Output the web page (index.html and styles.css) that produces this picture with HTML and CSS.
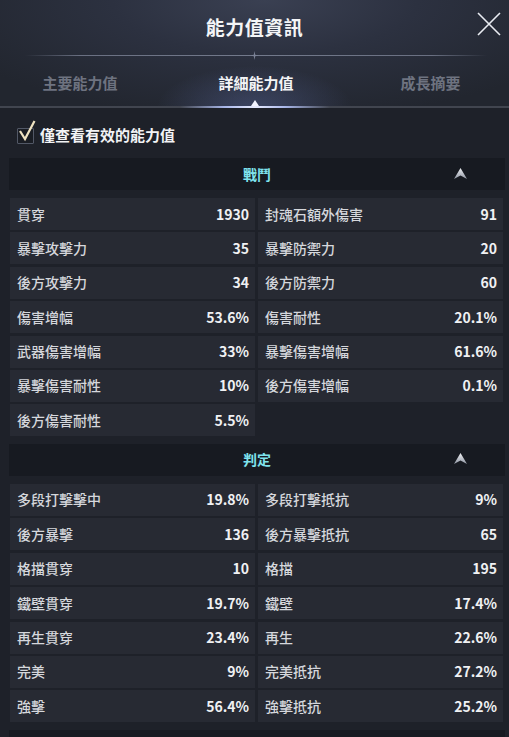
FILE: index.html
```html
<!DOCTYPE html>
<html lang="zh-Hant">
<head>
<meta charset="utf-8">
<title>能力值資訊</title>
<link rel="stylesheet" href="styles.css">
</head>
<body>
<div class="page">
  <header class="head">
    <div class="titlebar">
      <span></span>
      <h1 class="title">能力值資訊</h1>
      <button class="close" aria-label="關閉">
        <svg width="24" height="24" viewBox="0 0 24 24"><path d="M1 1 L23 23 M23 1 L1 23" stroke="#e9ecf2" stroke-width="1.6" fill="none"/></svg>
      </button>
    </div>
    <div class="divider">
      <svg class="sparkle" width="9" height="9" viewBox="0 0 9 9"><path d="M4.5 0 L5.2 3.8 L9 4.5 L5.2 5.2 L4.5 9 L3.8 5.2 L0 4.5 L3.8 3.8 Z" fill="#7b8296"/></svg>
    </div>
    <nav class="tabs">
      <span class="tab">主要能力值</span>
      <span class="tab active">詳細能力值</span>
      <span class="tab">成長摘要</span>
    </nav>
    <div class="tabline"><span class="tri"></span></div>
  </header>

  <label class="filter">
    <span class="box">
      <svg class="check" width="18" height="22" viewBox="0 0 18 22"><path d="M2 11 L7 19 L16.5 1" stroke="#efe3c2" stroke-width="2.2" fill="none" stroke-linejoin="miter"/></svg>
    </span>
    <span class="filter-text">僅查看有效的能力值</span>
  </label>

  <section class="group">
    <div class="group-head">
      <span class="group-title">戰鬥</span>
      <svg class="arrow" width="13" height="11" viewBox="0 0 13 11"><defs><linearGradient id="ag1" x1="0" y1="0" x2="0" y2="1"><stop offset="0" stop-color="#f0f2f5"/><stop offset="1" stop-color="#9096a3"/></linearGradient></defs><path d="M6.5 0 L13 11 L6.5 7.5 L0 11 Z" fill="url(#ag1)"/></svg>
    </div>
    <div class="grid">
      <div class="cell"><span class="k">貫穿</span><span class="v">1930</span></div>
      <div class="cell"><span class="k">封魂石額外傷害</span><span class="v">91</span></div>
      <div class="cell"><span class="k">暴擊攻擊力</span><span class="v">35</span></div>
      <div class="cell"><span class="k">暴擊防禦力</span><span class="v">20</span></div>
      <div class="cell"><span class="k">後方攻擊力</span><span class="v">34</span></div>
      <div class="cell"><span class="k">後方防禦力</span><span class="v">60</span></div>
      <div class="cell"><span class="k">傷害增幅</span><span class="v">53.6%</span></div>
      <div class="cell"><span class="k">傷害耐性</span><span class="v">20.1%</span></div>
      <div class="cell"><span class="k">武器傷害增幅</span><span class="v">33%</span></div>
      <div class="cell"><span class="k">暴擊傷害增幅</span><span class="v">61.6%</span></div>
      <div class="cell"><span class="k">暴擊傷害耐性</span><span class="v">10%</span></div>
      <div class="cell"><span class="k">後方傷害增幅</span><span class="v">0.1%</span></div>
      <div class="cell"><span class="k">後方傷害耐性</span><span class="v">5.5%</span></div>
    </div>
  </section>

  <section class="group">
    <div class="group-head">
      <span class="group-title">判定</span>
      <svg class="arrow" width="13" height="11" viewBox="0 0 13 11"><defs><linearGradient id="ag2" x1="0" y1="0" x2="0" y2="1"><stop offset="0" stop-color="#f0f2f5"/><stop offset="1" stop-color="#9096a3"/></linearGradient></defs><path d="M6.5 0 L13 11 L6.5 7.5 L0 11 Z" fill="url(#ag2)"/></svg>
    </div>
    <div class="grid">
      <div class="cell"><span class="k">多段打擊擊中</span><span class="v">19.8%</span></div>
      <div class="cell"><span class="k">多段打擊抵抗</span><span class="v">9%</span></div>
      <div class="cell"><span class="k">後方暴擊</span><span class="v">136</span></div>
      <div class="cell"><span class="k">後方暴擊抵抗</span><span class="v">65</span></div>
      <div class="cell"><span class="k">格擋貫穿</span><span class="v">10</span></div>
      <div class="cell"><span class="k">格擋</span><span class="v">195</span></div>
      <div class="cell"><span class="k">鐵壁貫穿</span><span class="v">19.7%</span></div>
      <div class="cell"><span class="k">鐵壁</span><span class="v">17.4%</span></div>
      <div class="cell"><span class="k">再生貫穿</span><span class="v">23.4%</span></div>
      <div class="cell"><span class="k">再生</span><span class="v">22.6%</span></div>
      <div class="cell"><span class="k">完美</span><span class="v">9%</span></div>
      <div class="cell"><span class="k">完美抵抗</span><span class="v">27.2%</span></div>
      <div class="cell"><span class="k">強擊</span><span class="v">56.4%</span></div>
      <div class="cell"><span class="k">強擊抵抗</span><span class="v">25.2%</span></div>
    </div>
  </section>

  <section class="group">
    <div class="group-head"></div>
  </section>
</div>
</body>
</html>
```

FILE: styles.css
```css
* { box-sizing: border-box; }
html, body {
  margin: 0;
  padding: 0;
  height: 100%;
  overflow: hidden;
  background: #1e2129;
}
body {
  font-family: "Noto Sans CJK TC", "Noto Sans", sans-serif;
  color: #e8eaee;
}
.page {
  width: 509px;
  height: 737px;
  overflow: hidden;
  background: #1e2129;
}

/* header */
.head {
  background:
    radial-gradient(ellipse 140px 60px at 50% 100%, rgba(120,140,220,0.28), rgba(120,140,220,0) 70%),
    radial-gradient(ellipse 340px 120px at 52% 0%, #3a4052 0%, #2c3140 45%, #22262f 100%);
}
.titlebar {
  height: 55px;
  display: grid;
  grid-template-columns: 1fr auto 1fr;
  align-items: center;
}
.title {
  margin: 0;
  font-size: 19px;
  font-weight: 700;
  color: #f4f5f7;
  letter-spacing: 0.5px;
  line-height: 1;
  padding-bottom: 3px;
}
.close {
  justify-self: end;
  margin-right: 8px;
  margin-bottom: 8px;
  width: 24px;
  height: 24px;
  padding: 0;
  border: 0;
  background: none;
  display: flex;
}
.divider {
  height: 1px;
  margin: 0 22px 0 25px;
  background: linear-gradient(90deg, rgba(110,116,132,0) 0%, #6a7082 12%, #737a8c 50%, #6a7082 88%, rgba(110,116,132,0) 100%);
  display: flex;
  justify-content: center;
  align-items: center;
}
.sparkle { flex: none; margin-left: -3px; }
.tabs {
  height: 50px;
  display: grid;
  grid-template-columns: 160px 192px 157px;
  align-items: center;
  padding-top: 2px;
}
.tab {
  text-align: center;
  font-size: 15px;
  font-weight: 700;
  color: #6e7380;
  line-height: 1;
}
.tab.active { color: #f4f5f7; }
.tabline {
  height: 2px;
  background:
    linear-gradient(90deg, rgba(160,175,235,0) 0%, rgba(180,195,250,0.9) 30%, #e8ecff 50%, rgba(180,195,250,0.9) 70%, rgba(160,175,235,0) 100%) center / 150px 2px no-repeat,
    #41454f;
  display: flex;
  justify-content: center;
}
.tri {
  width: 0;
  height: 0;
  margin-top: -6px;
  border-left: 4px solid transparent;
  border-right: 4px solid transparent;
  border-bottom: 6px solid #f2f4ff;
}

/* filter */
.filter {
  height: 50px;
  padding: 2px 0 0 17px;
  display: flex;
  align-items: center;
  gap: 6px;
}
.box {
  position: relative;
  flex: none;
  width: 17px;
  height: 16px;
  margin-top: 4px;
  border: 1.5px solid #525866;
  border-radius: 1px;
  background: #1a1d24;
}
.check {
  position: absolute;
  left: 0;
  top: -9px;
}
.filter-text {
  font-size: 15px;
  font-weight: 700;
  color: #f2f3f5;
  line-height: 1;
}

/* groups */
.group + .group { margin-top: 7.6px; }
.group-head {
  margin: 0 4px 0 9px;
  height: 32px;
  background: #171a21;
  display: grid;
  grid-template-columns: 1fr auto 1fr;
  align-items: center;
}
.group-title {
  grid-column: 2;
  font-size: 14px;
  font-weight: 700;
  color: #7fe3ee;
  line-height: 1;
  padding-bottom: 1px;
}
.arrow {
  grid-column: 3;
  justify-self: end;
  margin-right: 38px;
  margin-bottom: 2px;
}
.grid {
  margin: 8px 6px 0 10px;
  display: grid;
  grid-template-columns: 245px 245px;
  column-gap: 3px;
  row-gap: 2.4px;
}
.cell {
  height: 32px;
  background: #272a33;
  display: flex;
  align-items: center;
  justify-content: space-between;
  padding: 0 6px 1px 7px;
  font-size: 14px;
  line-height: 1;
}
.k {
  color: #d5d7dc;
  font-weight: 500;
}
.v {
  color: #f0f1f3;
  font-weight: 700;
}
```
